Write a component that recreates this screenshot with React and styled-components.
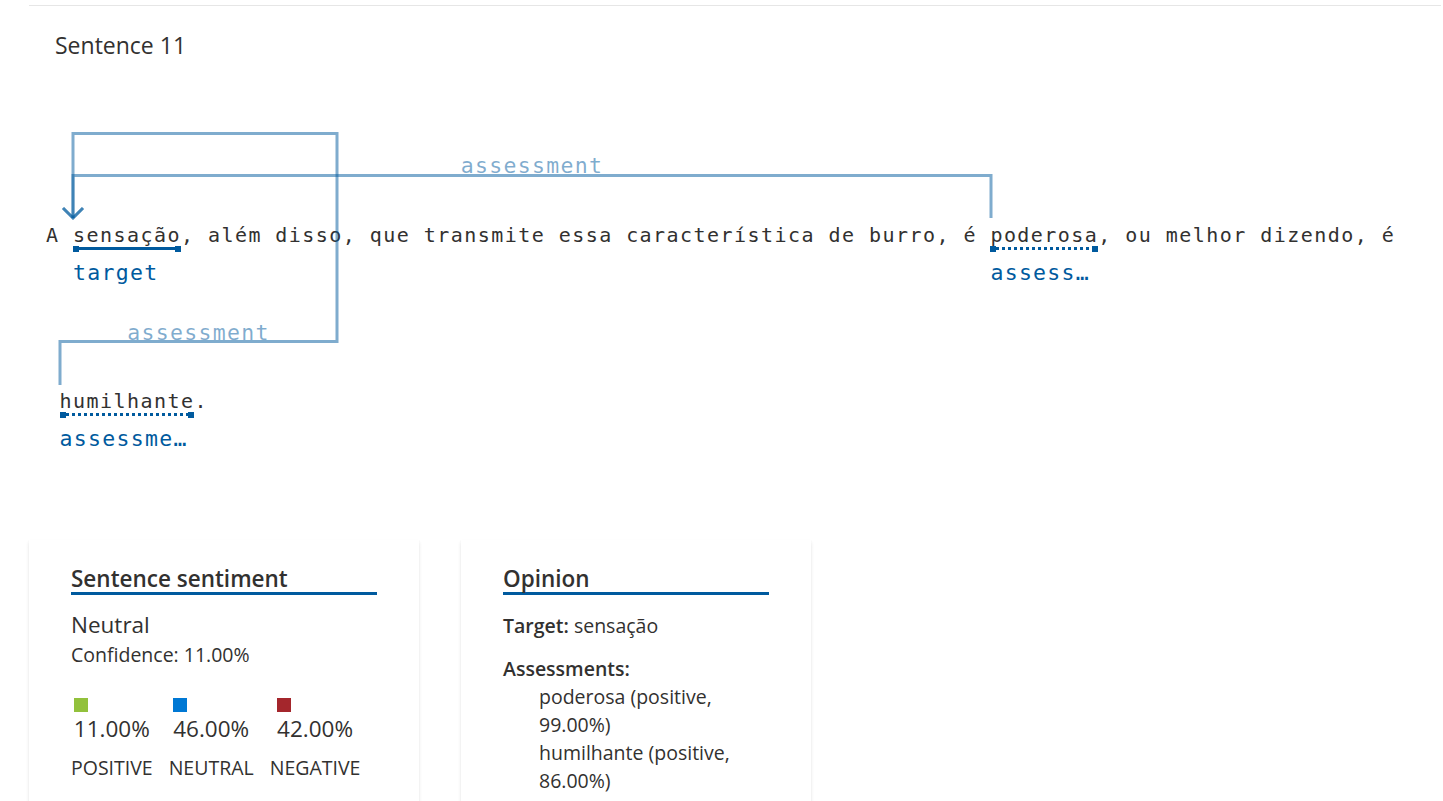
import React from 'react'
import styled, { createGlobalStyle } from 'styled-components'

const DARK_BLUE = '#005a9e'
const LINK = 'rgba(0, 90, 158, 0.5)'
const MONO = `'DejaVu Sans Mono', 'Liberation Mono', monospace`

const GlobalStyle = createGlobalStyle`
  html, body {
    margin: 0;
    padding: 0;
    background: #fff;
  }
  body {
    font-family: 'Open Sans', 'Noto Sans', sans-serif;
    color: #323130;
  }
`

const Page = styled.main`
  box-sizing: border-box;
  height: 100vh;
  overflow: hidden;
  padding: 5px 2px 0 29px;
`

const Section = styled.section`
  border-top: 1px solid #e6e6e6;
`

const SentenceTitle = styled.h2`
  margin: 23px 0 0;
  padding-left: 26px;
  font-size: 23px;
  font-weight: 400;
  line-height: 32px;
`

const Diagram = styled.div`
  position: relative;
  display: flex;
  flex-direction: column;
  gap: 103px;
  padding-top: 162px;
  font-family: ${MONO};
`

const TextLine = styled.div`
  display: flex;
  align-items: flex-start;
  padding-left: ${p => p.$indent}px;
  font-size: 20px;
  line-height: 24px;
  letter-spacing: 1.45px;
  white-space: pre;
  color: #323130;
`

const Annotated = styled.span`
  display: inline-flex;
  flex-direction: column;
`

const Underline = styled.span`
  position: relative;
  height: 3px;
  background: ${p =>
    p.$dotted
      ? `repeating-linear-gradient(90deg, ${DARK_BLUE} 0 3px, transparent 3px 6px)`
      : DARK_BLUE};

  &::before,
  &::after {
    content: '';
    position: absolute;
    top: -1.5px;
    width: 6px;
    height: 6px;
    background: ${DARK_BLUE};
  }
  &::before {
    left: 0;
  }
  &::after {
    right: 0;
  }
`

const Tag = styled.span`
  width: 0;
  min-width: 100%;
  margin-top: 10px;
  font-size: 21.5px;
  line-height: 26px;
  letter-spacing: 1.3px;
  color: ${DARK_BLUE};
  overflow: hidden;
  text-overflow: ellipsis;
  white-space: nowrap;
`

const Links = styled.svg`
  position: absolute;
  left: 0;
  top: 0;
  width: 100%;
  height: 100%;
  overflow: visible;
  pointer-events: none;
`

const LinkPath = styled.path`
  fill: none;
  stroke: ${LINK};
  stroke-width: 3;
`

const LinkText = styled.text`
  fill: ${LINK};
  font-family: ${MONO};
  font-size: 21.5px;
  letter-spacing: 1.3px;
`

const Cards = styled.div`
  display: flex;
  align-items: flex-start;
  gap: 42px;
  margin-top: 88px;
`

const Card = styled.section`
  box-sizing: border-box;
  width: ${p => p.$width}px;
  padding: 26px 42px 24px;
  background: #fff;
  box-shadow: 0 1.6px 3.6px 0 rgba(0, 0, 0, 0.11),
    0 0.3px 0.9px 0 rgba(0, 0, 0, 0.09);
`

const CardTitle = styled.h3`
  margin: 0;
  font-size: 22.5px;
  font-weight: 600;
  line-height: 26px;
  border-bottom: 3px solid ${DARK_BLUE};
`

const Verdict = styled.div`
  margin-top: 15px;
  font-size: 22.5px;
  line-height: 30px;
`

const Confidence = styled.div`
  margin-top: 2px;
  font-size: 19.5px;
  line-height: 26px;
`

const Stats = styled.div`
  display: flex;
  gap: 16px;
  margin-top: 30px;
`

const Stat = styled.div`
  display: flex;
  flex-direction: column;
  align-items: center;
`

const StatValue = styled.div`
  display: flex;
  flex-direction: column;
  align-items: flex-start;
`

const Swatch = styled.span`
  width: 14px;
  height: 14px;
  background: ${p => p.$color};
`

const Percent = styled.span`
  margin-top: 2px;
  font-size: 22.5px;
  line-height: 30px;
`

const StatName = styled.span`
  margin-top: 10.7px;
  font-size: 19.5px;
  line-height: 26px;
`

const Field = styled.div`
  margin-top: ${p => p.$gap}px;
  font-size: 19.5px;
  line-height: 28px;
`

const FieldName = styled.strong`
  font-weight: 600;
`

const AssessmentList = styled.ul`
  width: 230px;
  margin: 0;
  padding: 0 0 0 36px;
  list-style: none;
  font-size: 19.5px;
  line-height: 28px;
`

const stats = [
  { name: 'POSITIVE', value: '11.00%', color: '#92c13c' },
  { name: 'NEUTRAL', value: '46.00%', color: '#0078d4' },
  { name: 'NEGATIVE', value: '42.00%', color: '#a4262c' },
]

const assessments = ['poderosa (positive, 99.00%)', 'humilhante (positive, 86.00%)']

// connectors are drawn in page coordinates, shifted to the diagram origin
const links = [
  { d: 'M991 218 V175.5 H73 V218', label: { x: 532, y: 173 } },
  { d: 'M60 385 V341.5 H337 V133.5 H73 V218', label: { x: 198.5, y: 340 } },
]

const Token = ({ word, tag, dotted }) => (
  <Annotated>
    <span>{word}</span>
    <Underline $dotted={dotted} />
    <Tag>{tag}</Tag>
  </Annotated>
)

const SentenceDiagram = () => (
  <Diagram>
    <TextLine $indent={17}>
      <span>A </span>
      <Token word="sensação" tag="target" />
      <span>, além disso, que transmite essa característica de burro, é </span>
      <Token word="poderosa" tag="assessment" dotted />
      <span>, ou melhor dizendo, é</span>
    </TextLine>
    <TextLine $indent={30.5}>
      <Token word="humilhante" tag="assessment" dotted />
      <span>.</span>
    </TextLine>
    <Links>
      <g transform="translate(-29 -61)">
        {links.map((link, i) => (
          <g key={i}>
            <LinkPath d={link.d} />
            <LinkPath d="M63 208 L73 218 L83 208" />
            <LinkText x={link.label.x} y={link.label.y} textAnchor="middle">
              assessment
            </LinkText>
          </g>
        ))}
      </g>
    </Links>
  </Diagram>
)

export default function App() {
  return (
    <>
      <GlobalStyle />
      <Page>
        <Section>
          <SentenceTitle>Sentence 11</SentenceTitle>
          <SentenceDiagram />
          <Cards>
            <Card $width={390}>
              <CardTitle>Sentence sentiment</CardTitle>
              <Verdict>Neutral</Verdict>
              <Confidence>Confidence: 11.00%</Confidence>
              <Stats>
                {stats.map(s => (
                  <Stat key={s.name}>
                    <StatValue>
                      <Swatch $color={s.color} />
                      <Percent>{s.value}</Percent>
                    </StatValue>
                    <StatName>{s.name}</StatName>
                  </Stat>
                ))}
              </Stats>
            </Card>
            <Card $width={350}>
              <CardTitle>Opinion</CardTitle>
              <Field $gap={17}>
                <FieldName>Target:</FieldName> sensação
              </Field>
              <Field $gap={15}>
                <FieldName>Assessments:</FieldName>
              </Field>
              <AssessmentList>
                {assessments.map(a => (
                  <li key={a}>{a}</li>
                ))}
              </AssessmentList>
            </Card>
          </Cards>
        </Section>
      </Page>
    </>
  )
}
